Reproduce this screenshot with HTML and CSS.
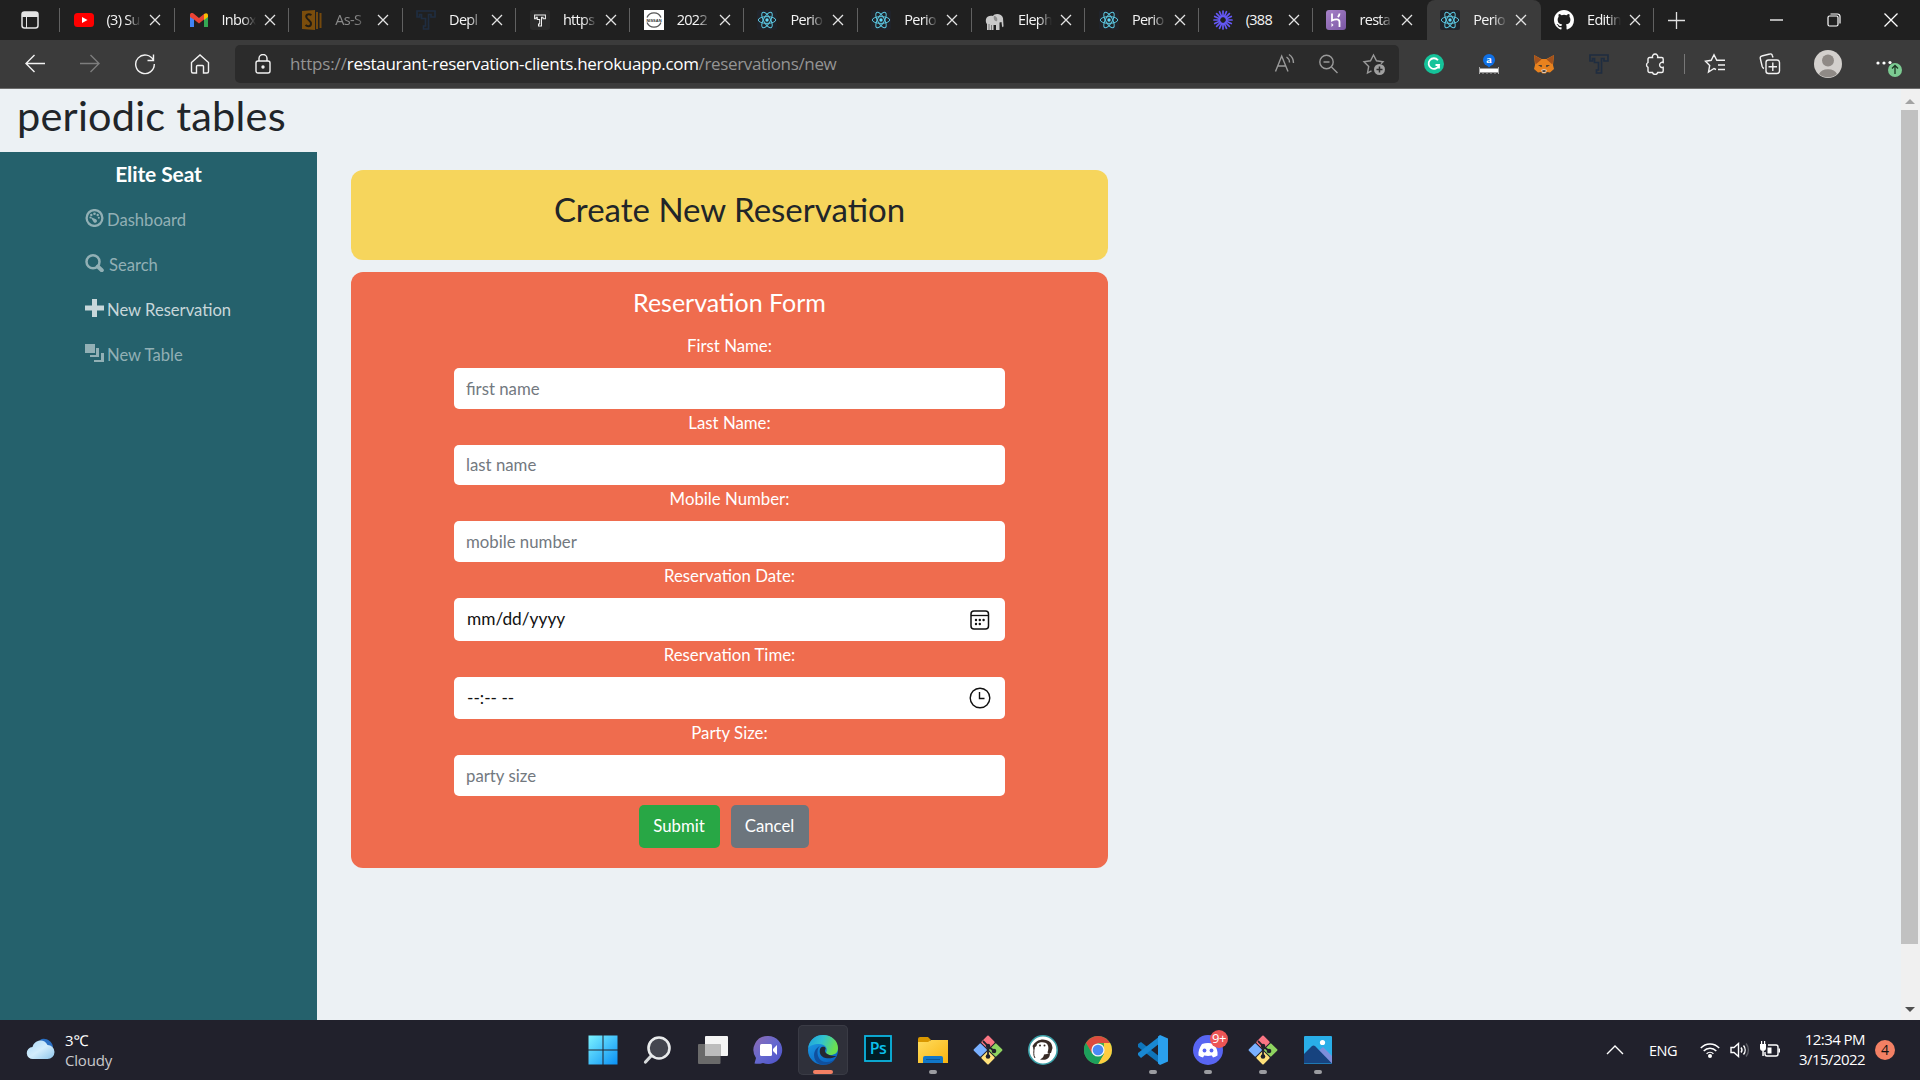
FILE: index.html
```html
<!DOCTYPE html>
<html lang="en">
<head>
<meta charset="utf-8">
<title>Periodic Tables</title>
<link rel="stylesheet" href="styles.css">
</head>
<body>
<svg class="defs" width="0" height="0">
  <defs>
    <linearGradient id="g-win" x1="0" y1="0" x2="1" y2="1"><stop offset="0" stop-color="#7cf3ff"/><stop offset="1" stop-color="#0a90f5"/></linearGradient>
    <linearGradient id="g-edge" x1="0" y1="0" x2="1" y2="0.3"><stop offset="0" stop-color="#1d9fdd"/><stop offset="0.5" stop-color="#31c3d0"/><stop offset="1" stop-color="#6be04f"/></linearGradient>
    <linearGradient id="g-edge2" x1="0" y1="0" x2="0.6" y2="1"><stop offset="0" stop-color="#1fa3e8"/><stop offset="1" stop-color="#0a65c4"/></linearGradient>
    <linearGradient id="g-chat" x1="0" y1="0" x2="1" y2="1"><stop offset="0" stop-color="#8f6bb0"/><stop offset="0.5" stop-color="#6568cf"/><stop offset="1" stop-color="#4b50c8"/></linearGradient>
    <linearGradient id="g-folder" x1="0" y1="0" x2="1" y2="1"><stop offset="0" stop-color="#ffdc5e"/><stop offset="1" stop-color="#f9b40f"/></linearGradient>
    <linearGradient id="g-cloud" x1="0" y1="0" x2="1" y2="1"><stop offset="0" stop-color="#a9d8f8"/><stop offset="0.5" stop-color="#d3edfc"/><stop offset="1" stop-color="#8cc4ea"/></linearGradient>
    <linearGradient id="g-heroku" x1="0" y1="0" x2="1" y2="1"><stop offset="0" stop-color="#a883c9"/><stop offset="1" stop-color="#7a56a3"/></linearGradient>
  </defs>
  <symbol id="i-x" viewBox="0 0 12 12"><path d="M1 1l10 10M11 1L1 11" fill="none" stroke="currentColor" stroke-width="1.3"/></symbol>
  <symbol id="i-react" viewBox="0 0 20 20"><rect width="20" height="20" rx="2" fill="#20232a"/><g fill="none" stroke="#5bc5e0" stroke-width="1"><ellipse cx="10" cy="10" rx="8.7" ry="3.4"/><ellipse cx="10" cy="10" rx="8.7" ry="3.4" transform="rotate(60 10 10)"/><ellipse cx="10" cy="10" rx="8.7" ry="3.4" transform="rotate(120 10 10)"/></g><circle cx="10" cy="10" r="1.7" fill="#61dafb"/></symbol>
  <symbol id="i-tee" viewBox="0 0 20 20"><path d="M1 1h18v6h-4v-2.5h-2.5v14.500h-5v-3h2V8.500h-4V4.500H3.500V7H1z" fill="none" stroke="currentColor" stroke-width="1.700"/></symbol>
  <symbol id="i-git" viewBox="0 0 30 30"><g transform="rotate(45 15 15)"><rect x="4.500" y="4.500" width="10" height="10" rx="1" fill="#f97583"/><rect x="15.500" y="4.500" width="10" height="10" rx="1" fill="#8fd460"/><rect x="4.500" y="15.500" width="10" height="10" rx="1" fill="#79b0ff"/><rect x="15.500" y="15.500" width="10" height="10" rx="1" fill="#ffe17a"/></g><path d="M10 6l5 5v11M15 11l6 5" stroke="#20212b" stroke-width="1.800" fill="none"/><g fill="#20212b"><circle cx="15" cy="11" r="2.300"/><circle cx="15" cy="21.500" r="2.300"/><circle cx="21" cy="16" r="2.300"/></g></symbol>
</svg>

<header class="tabs">
  <div class="tab-actions"><svg width="18" height="18" viewBox="0 0 18 18"><rect x="1" y="1" width="16" height="16" rx="2.500" fill="none" stroke="#e4e4e4" stroke-width="1.500"/><path d="M1 3a2 2 0 0 1 2-2h12a2 2 0 0 1 2 2v3H1z" fill="#e4e4e4"/><path d="M5.500 6v11" stroke="#e4e4e4"/></svg></div>
  <div class="tab first"><svg class="fav" viewBox="0 0 20 20"><rect y="3" width="20" height="14" rx="3.500" fill="#f00"/><path d="M8 7l5.500 3L8 13z" fill="#fff"/></svg><span>(3) Su</span><svg class="x"><use href="#i-x"/></svg></div>
  <div class="tab"><svg class="fav" viewBox="0 0 20 20"><path d="M1 5v12h4V9z" fill="#4285f4"/><path d="M19 5v12h-4V9z" fill="#34a853"/><path d="M1 5c0-2 2-2.500 3.500-1.500L10 8l5-4v5.500l-5 4-5-4L1 7z" fill="#ea4335"/><path d="M15 4c2-1.500 4-.8 4 1.200V7l-4 3z" fill="#fbbc04"/></svg><span>Inbox</span><svg class="x"><use href="#i-x"/></svg></div>
  <div class="tab dim"><svg class="fav" viewBox="0 0 20 20"><path d="M0 1l13-1v20l-13-1z" fill="#7b4d0c"/><path d="M9.500 5C6 3 3.500 5 4.500 7.500S9.500 11 9 14s-4 2.500-5.500 1" fill="none" stroke="#211c14" stroke-width="2"/><path d="M15 2v17M18.500 3v15" stroke="#74490d" stroke-width="2"/></svg><span>As-S</span><svg class="x"><use href="#i-x"/></svg></div>
  <div class="tab"><svg class="fav navy"><use href="#i-tee"/></svg><span>Depl</span><svg class="x"><use href="#i-x"/></svg></div>
  <div class="tab"><svg class="fav" viewBox="0 0 20 20"><rect width="20" height="20" rx="3" fill="#2b2b2b"/><svg x="4" y="4" width="12" height="13" color="#f2f2f2"><use href="#i-tee"/></svg></svg><span>https</span><svg class="x"><use href="#i-x"/></svg></div>
  <div class="tab"><svg class="fav" viewBox="0 0 20 20"><rect width="20" height="20" fill="#fff"/><path d="M3 7.500a7.600 7.600 0 0 1 14 0M3 12.500a7.600 7.600 0 0 0 14 0" fill="none" stroke="#555" stroke-width="1.200"/><text x="10" y="11.700" class="nissan">NISSAN</text></svg><span>2022</span><svg class="x"><use href="#i-x"/></svg></div>
  <div class="tab"><svg class="fav"><use href="#i-react"/></svg><span>Perio</span><svg class="x"><use href="#i-x"/></svg></div>
  <div class="tab"><svg class="fav"><use href="#i-react"/></svg><span>Perio</span><svg class="x"><use href="#i-x"/></svg></div>
  <div class="tab"><svg class="fav" viewBox="0 0 20 20"><path d="M1 9c1-3 4-3.500 7-3 1-3 9-3 10 2l.5 8c0 1.500-1.500 1.500-1.500 0l-.5-4-2 .5V20h-3.500v-5H8.500v5H2v-6c-1-.5-1.500-3-1-5z" fill="#c9c9c9"/><path d="M9 6c2 0 4 2 3 5-2 1-4-2-3-5z" fill="#8d8d8d"/><path d="M4 14v6M6.500 15v5" stroke="#777"/></svg><span>Eleph</span><svg class="x"><use href="#i-x"/></svg></div>
  <div class="tab"><svg class="fav"><use href="#i-react"/></svg><span>Perio</span><svg class="x"><use href="#i-x"/></svg></div>
  <div class="tab"><svg class="fav" viewBox="0 0 20 20"><g stroke="#6458f5" stroke-width="1.700" stroke-linecap="round"><path d="M10 1v5.500M10 13.500V19M1 10h5.500M13.500 10H19M3.600 3.600l4 4M12.400 12.400l4 4M3.600 16.400l4-4M12.400 7.600l4-4M6.500 1.700l2.200 5M11.300 13.300l2.200 5M1.700 6.500l5 2.200M13.300 11.300l5 2.200M1.700 13.500l5-2.200M13.300 8.700l5-2.200M6.500 18.300l2.200-5M11.300 6.700l2.200-5"/></g></svg><span class="full">(388</span><svg class="x"><use href="#i-x"/></svg></div>
  <div class="tab"><svg class="fav" viewBox="0 0 20 20"><rect width="20" height="20" rx="3" fill="url(#g-heroku)"/><path d="M6 3.500v7c3-1.500 7.500-1.800 7.500 1.500v5M13.500 3.500c0 1.500-.7 2.500-1.700 3.500" fill="none" stroke="#fff" stroke-width="1.800"/><path d="M5.500 13v4l2-2z" fill="#fff"/></svg><span>resta</span><svg class="x"><use href="#i-x"/></svg></div>
  <div class="tab active"><svg class="fav"><use href="#i-react"/></svg><span>Perio</span><svg class="x"><use href="#i-x"/></svg></div>
  <div class="tab"><svg class="fav" viewBox="0 0 16 16"><path fill="#fff" d="M8 0C3.580 0 0 3.580 0 8c0 3.540 2.290 6.530 5.470 7.590.4.070.55-.17.55-.38v-1.490c-2.010.37-2.530-.49-2.690-.94-.09-.23-.48-.94-.82-1.130-.28-.15-.68-.52-.01-.53.63-.01 1.080.58 1.230.82.720 1.210 1.870.87 2.330.66.070-.52.280-.87.510-1.070-1.780-.2-3.640-.89-3.640-3.950 0-.87.310-1.590.82-2.150-.08-.2-.36-1.020.08-2.120 0 0 .67-.21 2.200.82a7.600 7.600 0 0 1 4 0c1.530-1.040 2.200-.82 2.200-.82.440 1.100.16 1.920.08 2.120.51.560.82 1.270.82 2.150 0 3.070-1.870 3.750-3.650 3.950.29.250.54.730.54 1.480v2.200c0 .21.150.46.55.38A8 8 0 0 0 16 8c0-4.420-3.580-8-8-8z"/></svg><span>Editin</span><svg class="x"><use href="#i-x"/></svg></div>
  <svg class="plus" width="17" height="17" viewBox="0 0 17 17"><path d="M8.500 0v17M0 8.500h17" stroke="#e0e0e0" stroke-width="1.300"/></svg>
  <div class="window-buttons">
    <svg width="14" height="14"><path d="M0 7h13" stroke="#fff" stroke-width="1.300"/></svg>
    <svg width="14" height="14" fill="none" stroke="#fff" stroke-width="1.200"><rect x="1" y="3" width="10" height="10" rx="1.500"/><path d="M3.500 1h7a2.500 2.500 0 0 1 2.500 2.500v7"/></svg>
    <svg width="14" height="14"><path d="M.5.5l13 13M13.500.5l-13 13" stroke="#fff" stroke-width="1.300"/></svg>
  </div>
</header>

<nav class="toolbar">
  <div class="nav-buttons">
    <svg width="22" height="22" viewBox="0 0 22 22"><path d="M21 10.500H2M10.500 2L2 10.500l8.500 8.500"/></svg>
    <svg class="off" width="22" height="22" viewBox="0 0 22 22"><path d="M1 10.500h19M11.500 2l8.500 8.500-8.500 8.500"/></svg>
    <svg width="22" height="22" viewBox="0 0 22 22"><path d="M19.500 7.500A9.300 9.300 0 1 0 20.300 11M19.500 1.500v6h-6"/></svg>
    <svg width="22" height="22" viewBox="0 0 22 22"><path d="M2.500 9.500L11 2l8.500 7.500v9a1.500 1.500 0 0 1-1.500 1.500h-3.500v-6.500a1 1 0 0 0-1-1h-5a1 1 0 0 0-1 1V20H4a1.500 1.500 0 0 1-1.500-1.500z"/></svg>
  </div>
  <div class="address">
    <svg width="16" height="20" viewBox="0 0 16 20"><rect x="1" y="7" width="14" height="12" rx="2"/><path d="M4 7V4.500a4 4 0 0 1 8 0V7"/><circle cx="8" cy="13" r="1" fill="#fff"/></svg>
    <div class="url"><span class="scheme">https://</span><span class="host">restaurant-reservation-clients.herokuapp.com</span><span class="path">/reservations/new</span></div>
    <div class="address-actions">
      <svg class="read" width="22" height="22" viewBox="0 0 22 22"><path d="M1.500 18.500L7.700 3 14 18.500M3.700 13h8M12.500 4a6.500 6.500 0 0 1 3 5.500M15 1.500a10 10 0 0 1 4.500 8.500"/></svg>
      <svg width="22" height="22" viewBox="0 0 22 22"><circle cx="9.500" cy="9" r="6.700"/><path d="M14.500 14l6 6M6.500 9h6"/></svg>
      <svg width="24" height="24" viewBox="0 0 24 24"><path d="M9.500 18.800L5.500 21l1.200-6.500L2 9.800l6.500-1L11.500 3l3 5.800 6.500 1-2 2"/><circle cx="17.500" cy="17.500" r="5.500" fill="#a0a0a0" stroke="none"/><path d="M17.500 14.500v6M14.500 17.500h6" stroke="#2b2b2b" stroke-width="1.500"/></svg>
    </div>
  </div>
  <div class="extensions">
    <svg class="solid" width="20" height="20" viewBox="0 0 20 20"><circle cx="10" cy="10" r="10" fill="#15c39a"/><path d="M14 6.200A5.300 5.300 0 1 0 15 11h-3.500M15 11v3.500" stroke="#fff" stroke-width="1.800"/></svg>
    <svg class="solid" width="20" height="20" viewBox="0 0 20 20"><circle cx="10" cy="6" r="6" fill="#0f70e6"/><text x="10" y="9" class="glyph-a">a</text><path d="M7 10.500l3 3 3-3z" fill="#0f70e6"/><path d="M1 14.500h18v4H1z" fill="#fff"/><path d="M.5 13v7M19.500 13v7M4 19v1.500M8 19v1.500M12 19v1.500M16 19v1.500" stroke="#aaa" stroke-width="1"/></svg>
    <svg class="solid" width="20" height="20" viewBox="0 0 20 20"><path d="M0 1l7.500 4h5L20 1l-1 10 1 4-4 3.500-3-.5-1.500 1.500h-3L7 18l-3 .5L0 15l1-4z" fill="#e8821e"/><path d="M0 1l7.500 4.500-6 5zM20 1l-7.500 4.500 6 5z" fill="#a2511c"/><path d="M4 11l4 .3-.5 2zM16 11l-4 .3.500 2z" fill="#333"/><path d="M7 16l3-1 3 1-1.500 3h-3z" fill="#d9c9bb"/><path d="M8.500 16.300h3v1.500h-3z" fill="#222"/></svg>
    <svg class="navy solid" width="20" height="20"><use href="#i-tee"/></svg>
    <svg width="22" height="22" viewBox="0 0 22 22"><path d="M5.500 4.500h3a2.700 2.700 0 1 1 5.200 0h4a1.500 1.500 0 0 1 1.500 1.500v3.500a2.600 2.600 0 1 0 0 4.800V18a1.500 1.500 0 0 1-1.500 1.500h-4a2.700 2.700 0 0 1-5.200 0h-3A1.500 1.500 0 0 1 4 18v-3.700a2.700 2.700 0 0 1 0-4.800V6a1.500 1.500 0 0 1 1.500-1.500z"/></svg>
  </div>
  <div class="profile">
    <svg width="22" height="22" viewBox="0 0 22 22"><path d="M12 16.500L10 15.500l-5.500 3.500 1.200-6.500L1.500 8.300l5.700-1L10 1.800l2.800 5.500H21M14 12h7M14 16.500h7"/></svg>
    <svg width="22" height="22" viewBox="0 0 22 22"><path d="M5 15.500c-1-.3-1.500-1-1.800-2L1.300 5.500a2 2 0 0 1 1.500-2.500l8-2a2 2 0 0 1 2.500 1.500l.7 2"/><rect x="7" y="7" width="13.500" height="13.500" rx="2.500"/><path d="M13.800 9.500v8.500M9.500 13.800h8.500"/></svg>
    <svg class="solid" width="28" height="28" viewBox="0 0 28 28"><circle cx="14" cy="14" r="14" fill="#d3d0cd"/><circle cx="14" cy="10.500" r="6" fill="#8f8a86"/><path d="M5 24a9.500 7 0 0 1 18 0 14 14 0 0 1-18 0z" fill="#8f8a86"/></svg>
    <svg class="solid" width="28" height="28" viewBox="0 0 28 28"><g fill="#fff"><circle cx="3" cy="13" r="1.600"/><circle cx="9" cy="13" r="1.600"/><circle cx="15" cy="12.500" r="1.600"/></g><circle cx="20" cy="20" r="7" fill="#7ccb92"/><path d="M20 24v-8M17 18.500l3-3 3 3" fill="none" stroke="#1d3524" stroke-width="1.300"/></svg>
  </div>
</nav>

<div class="viewport">
  <div class="page">
    <h1 class="site-title">periodic tables</h1>
    <div class="columns">
      <aside class="sidebar">
        <div class="brand">Elite Seat</div>
        <a class="link"><svg width="19" height="18" viewBox="0 0 19 18"><circle cx="9.500" cy="9" r="7.900" fill="none" stroke="currentColor" stroke-width="2.300"/><g fill="currentColor"><circle cx="9.500" cy="4.800" r="1.300"/><circle cx="6.300" cy="6" r="1.200"/><circle cx="12.700" cy="6" r="1.200"/><circle cx="5.400" cy="8.500" r="1"/><circle cx="13.800" cy="8.800" r="1"/><path d="M5.500 8l5.500 2.300a1.900 1.900 0 1 1-2.800 2z"/></g></svg><span>Dashboard</span></a>
        <a class="link"><svg width="19" height="18" viewBox="0 0 19 18"><circle cx="8" cy="7.800" r="6.500" fill="none" stroke="currentColor" stroke-width="2.500"/><path d="M12.800 12.500l4 3.700" stroke="currentColor" stroke-width="4" stroke-linecap="round"/></svg><span class="search">Search</span></a>
        <a class="link current"><svg width="19" height="18" viewBox="0 0 19 18"><path d="M7 0h5v6.500h7v5h-7V18H7v-6.500H0v-5h7z" fill="currentColor"/></svg><span>New Reservation</span></a>
        <a class="link"><svg width="19" height="18" viewBox="0 0 19 18"><path d="M0 0h10v9H0zM11 4h3v9H5v-2h6zM16 9h3v9H9v-2h7z" fill="currentColor"/></svg><span>New Table</span></a>
      </aside>
      <main class="main">
        <h2 class="banner">Create New Reservation</h2>
        <form class="form">
          <h3>Reservation Form</h3>
          <label>First Name:</label>
          <input class="field" type="text" placeholder="first name">
          <label>Last Name:</label>
          <input class="field h40" type="text" placeholder="last name">
          <label>Mobile Number:</label>
          <input class="field" type="text" placeholder="mobile number">
          <label>Reservation Date:</label>
          <div class="field picker h43"><span>mm/dd/yyyy</span><svg width="20" height="20" viewBox="0 0 20 20"><rect x="1" y="1" width="17.500" height="18" rx="3" fill="none" stroke="#111" stroke-width="1.500"/><path d="M1 5.500h17.500" stroke="#111" stroke-width="1.300"/><g fill="#111"><circle cx="6" cy="10" r="1.200"/><circle cx="9.800" cy="10" r="1.200"/><circle cx="13.600" cy="10" r="1.200"/><circle cx="6" cy="14" r="1.200"/><circle cx="9.800" cy="14" r="1.200"/></g></svg></div>
          <label>Reservation Time:</label>
          <div class="field picker time h42"><span>--:-- --</span><svg width="22" height="22" viewBox="0 0 22 22" fill="none" stroke="#111" stroke-width="1.400"><circle cx="11" cy="11" r="9.800"/><path d="M10.500 5v6.500h5"/></svg></div>
          <label>Party Size:</label>
          <input class="field" type="text" placeholder="party size">
          <div class="buttons"><button type="button" class="submit">Submit</button><button type="button" class="cancel">Cancel</button></div>
        </form>
      </main>
    </div>
  </div>
  <div class="scrollbar"><i class="up"></i><b></b><i class="down"></i></div>
</div>

<footer class="taskbar">
  <div class="weather">
    <svg width="30" height="24" viewBox="0 0 30 24"><path d="M14 3c4-3 12 0 13 7l-6 4z" fill="#2a70c4"/><path d="M7 22a6 6 0 0 1-.5-12C8 3 18 .5 21.500 8a7 7 0 0 1 0 14z" fill="url(#g-cloud)"/></svg>
    <div><p>3℃</p><p class="sub">Cloudy</p></div>
  </div>
  <div class="apps">
    <div class="app"><svg viewBox="0 0 30 30"><path d="M0 0h14v14H0zM15 0h14v14H15zM0 15h14v14H0zM15 15h14v14H15z" fill="url(#g-win)" transform="translate(.5 .5)"/></svg></div>
    <div class="app"><svg viewBox="0 0 30 30"><path d="M9 20l-6.500 7" stroke="#d6d9db" stroke-width="3.200" stroke-linecap="round"/><circle cx="16" cy="13" r="10.500" fill="#44464f" stroke="#e9ebec" stroke-width="2.600"/></svg></div>
    <div class="app"><svg viewBox="0 0 30 30"><rect x="7" y="1" width="23" height="20" rx="1" fill="#f4f4f4"/><rect x="0" y="9" width="22.500" height="20" rx="1" fill="#6a6a6a"/><path d="M7 9h15.500v12H7z" fill="#bcbcbc"/></svg></div>
    <div class="app"><svg viewBox="0 0 30 30"><path d="M15 1a14 14 0 1 1-5 27c-3 1-6 1-8.500.5L3 23A14 14 0 0 1 15 1z" fill="url(#g-chat)"/><rect x="7" y="9" width="12" height="12" rx="1.500" fill="#fff"/><path d="M20 14l4-4v10l-4-4z" fill="#fff"/></svg></div>
    <div class="app selected"><svg viewBox="0 0 30 30"><circle cx="15" cy="15" r="15" fill="url(#g-edge2)"/><path d="M.2 13C1.500 4 8 0 15 0c9 0 15 6 15 13 0 5-3.500 7-7.500 7-3 0-5-1.500-4.200-3C20 13 17 9 11 9 5.500 9 1.500 11 .2 13z" fill="url(#g-edge)"/><path d="M12 11c-4 3-4 15 6 16 4 .5 7-1 9.500-3.500C24 30 15 31.500 10 28 4 24 5 14 12 11z" fill="#10509e"/><path d="M12.500 13c-2 4 0 9 5 10 4 .8 8 0 11-2-2 0-9-.5-11-3.500-1.500-2 .5-3 0-4.500s-3.500-2-5 0z" fill="#252733"/></svg><em></em></div>
    <div class="app"><svg viewBox="0 0 30 30"><rect x="2" y="1" width="26" height="25" fill="#001d26" stroke="#0cb6e2" stroke-width="1.800"/><text x="15" y="19" class="ps">Ps</text></svg></div>
    <div class="app open"><svg viewBox="0 0 30 30"><path d="M0 4a2 2 0 0 1 2-2h8l3 3h-1v5H0z" fill="#d99700"/><path d="M0 7h10l3-2h17v23H0z" fill="url(#g-folder)"/><path d="M5 28v-5a2 2 0 0 1 2-2h16a2 2 0 0 1 2 2v5z" fill="#1177c8"/><path d="M8 24.500h14" stroke="#0a5799"/></svg><em></em></div>
    <div class="app"><svg><use href="#i-git"/></svg></div>
    <div class="app"><svg viewBox="0 0 30 30"><circle cx="15" cy="15" r="14.200" fill="#fff" stroke="#3aa0a8" stroke-width="1.600"/><path d="M4.500 11C8 5 14 3.500 18 5c4 1 6 3 6.500 8l-1.500 5-3 .5c-1-3 0-6-2-8-2-1.500-5-1.500-7-.5l-4 2-1 3z" fill="#382b26"/><path d="M9 9c2-2 6-2.500 9-1 2 1.500 3 4 2 8l-2 2-6-1-4-4z" fill="#fff"/><path d="M19 19l3-1c0 3-1 5-3 6-2 1-5 1-7 .5 2-1 4-3 4-5z" fill="#382b26"/><path d="M6 13c0 4-1 7 1 10" fill="none" stroke="#382b26" stroke-width="1"/><circle cx="12" cy="10.500" r="1" fill="#382b26"/><circle cx="16.500" cy="10.500" r="1" fill="#382b26"/></svg></div>
    <div class="app"><svg viewBox="0 0 30 30"><circle cx="15" cy="15" r="14" fill="#4caf50"/><path d="M2.900 8A14 14 0 0 1 27.100 8H15z" fill="#dd4b3e"/><path d="M2.900 8L9 18.500 15 8z" fill="#dd4b3e"/><path d="M27.100 8A14 14 0 0 1 15 29l6-10.500V8z" fill="#ffcd40"/><path d="M2.900 8A14 14 0 0 0 15 29l6-10.500-12 0z" fill="#1da05c"/><circle cx="15" cy="15" r="6.600" fill="#f3f3f3"/><circle cx="15" cy="15" r="5.300" fill="#4a8af4"/></svg></div>
    <div class="app open"><svg viewBox="0 0 30 30"><path d="M0 9l3-2 19 15v7L0 12z" fill="#0f75ba"/><path d="M0 20l3 3L22 8V1L0 18z" fill="#1988d2"/><path d="M22 0l8 3.500v23L22 30l-2-1.500V1.500z" fill="#2aa0ee"/></svg><em></em></div>
    <div class="app open"><svg viewBox="0 0 30 30"><circle cx="15" cy="15" r="15" fill="#5865f2"/><path d="M9 9c4-1.500 8-1.500 12 0 2.500 3.500 4 7.500 3.500 11.500-1.500 1-3 1.500-4.500 2l-1.200-2c-2.500.6-5 .6-7.600 0L10 22.500c-1.500-.5-3-1-4.500-2C5 16.500 6.500 12.500 9 9z" fill="#fff"/><circle cx="11.500" cy="15.500" r="1.900" fill="#5865f2"/><circle cx="18.500" cy="15.500" r="1.900" fill="#5865f2"/></svg><em></em><span class="badge">9+</span></div>
    <div class="app open"><svg><use href="#i-git"/></svg><em></em></div>
    <div class="app open"><svg viewBox="0 0 30 30"><rect x="1" y="1" width="28" height="28" rx="1" fill="#29aee8"/><path d="M14 17l6-5 9 9v7H14z" fill="#7d8fdb"/><path d="M1 19l8-8c1-.8 2-.8 3 0l17 17.500H2a1 1 0 0 1-1-1z" fill="#17437f"/><circle cx="19.500" cy="7.500" r="2.600" fill="#fff"/></svg><em></em></div>
  </div>
  <div class="tray">
    <svg width="18" height="10" viewBox="0 0 18 10"><path d="M1 9l8-8 8 8"/></svg>
    <span class="lang">ENG</span>
    <svg width="20" height="16" viewBox="0 0 20 16"><path d="M.8 6a12.500 12.500 0 0 1 18.400 0M3.700 9a8.600 8.600 0 0 1 12.600 0M6.600 11.700a5 5 0 0 1 6.800 0"/><circle cx="10" cy="14" r="2" fill="#fff" stroke="none"/></svg>
    <svg class="vol" width="20" height="16" viewBox="0 0 20 16"><path d="M1 5.500h3L8.500 1.500v13L4 10.500H1z"/><path d="M11 5.500a4 4 0 0 1 0 5M13.500 3.500a7 7 0 0 1 0 9"/><path d="M16 1.500a10 10 0 0 1 0 13" stroke="#5d5e66"/></svg>
    <svg width="20" height="18" viewBox="0 0 20 18"><path d="M8 4h8a2 2 0 0 1 2 2v7a2 2 0 0 1-2 2H7a2 2 0 0 1-2-2v-2"/><path d="M18.500 7.500h1.500v4h-1.500zM7.500 6.500h4v6h-4zM0 3h6v4a3 3 0 0 1-6 0zM1 0h1.200v3H1zM4 0h1.200v3H4zM2.300 9h1.500v6H2.300z" fill="#fff" stroke="none"/></svg>
    <div class="clock"><p>12:34 PM</p><p>3/15/2022</p></div>
    <span class="count">4</span>
  </div>
</footer>
</body>
</html>
```
FILE: styles.css
```css
* { box-sizing: border-box; }
html, body { margin: 0; height: 1080px; overflow: hidden; }
body {
  display: flex;
  flex-direction: column;
  width: 1920px;
  font-family: Lato, "Liberation Sans", sans-serif;
  font-size: 16.8px;
  background: #ecf1f4;
}
p, h1, h2, h3 { margin: 0; font-weight: 400; }
svg { display: block; flex: none; }
.defs { position: absolute; }

.tabs, .toolbar, .taskbar { font-family: "Open Sans", "Noto Sans", sans-serif; color: #fff; flex: none; }

/* tab strip */
.tabs { display: flex; align-items: center; height: 40px; background: #202020; }
.tab-actions { display: flex; align-items: center; width: 60px; height: 24px; padding-left: 21px; border-right: 1px solid #616161; }
.tab { width: 113.8px; height: 40px; display: flex; align-items: center; flex: none; padding-left: 13.5px; background: linear-gradient(#616161, #616161) right 8px / 1px 24px no-repeat; }
.tab.first { width: 115px; }
.tab:has(+ .active), .tab.active { background-image: none; }
.tab.active { background-color: #3b3b3b; border-radius: 8px 8px 0 0; }
.fav { width: 20px; height: 20px; }
.tab span {
  width: 34px; margin: -1px 8px 0 13px; overflow: hidden; white-space: nowrap;
  font-size: 14.5px; line-height: 24px; letter-spacing: -0.7px; color: #f4f4f4;
  -webkit-mask-image: linear-gradient(90deg, #000 60%, transparent);
  mask-image: linear-gradient(90deg, #000 60%, transparent);
}
.tab .full { -webkit-mask-image: none; mask-image: none; }
.tab.dim span { color: #8a8a8a; }
.x { width: 12px; height: 12px; color: #e4e4e4; }
.navy { color: #1f2d40; }
.nissan { font: 700 4px "Liberation Sans", sans-serif; text-anchor: middle; fill: #333; }
.plus { margin-left: 14px; }
.window-buttons { display: flex; gap: 43px; margin-left: auto; padding-right: 22px; }

/* toolbar */
.toolbar { display: flex; align-items: center; height: 49px; background: #3b3b3b; border-bottom: 1px solid #6c6c6c; }
.toolbar svg { fill: none; stroke: #f2f2f2; stroke-width: 1.4; }
.toolbar svg.solid { stroke: none; }
.nav-buttons { display: flex; gap: 33px; width: 235px; padding-left: 24px; }
.toolbar .off { stroke: #7d7d7d; }
.address { display: flex; align-items: center; width: 1164px; height: 38px; padding: 0 13px 0 20px; background: #2b2b2b; border-radius: 5px; }
.url { margin-left: 19px; font-size: 17px; line-height: 24px; white-space: nowrap; }
.scheme, .path { color: #949494; }
.scheme { letter-spacing: -0.15px; }
.host { letter-spacing: -0.3px; }
.path { letter-spacing: -0.35px; }
.address-actions { display: flex; align-items: center; gap: 23px; margin-left: auto; }
.address-actions .read { margin-right: -2px; }
.toolbar .address-actions svg { stroke: #9a9a9a; }
.extensions { display: flex; align-items: center; gap: 35px; padding: 0 18px 0 25px; }
.glyph-a { font: 700 11px "Liberation Serif", serif; text-anchor: middle; fill: #fff; stroke: none; }
.profile { display: flex; align-items: center; gap: 33px; padding-left: 20px; background: linear-gradient(#777, #777) left center / 1px 20px no-repeat; }

/* page */
.viewport { display: flex; height: 931px; flex: none; }
.page { width: 1901px; display: flex; flex-direction: column; color: #212529; }
.site-title { height: 63px; padding-left: 17px; font-size: 41.5px; line-height: 52px; letter-spacing: 0.2px; }
.columns { display: flex; flex: 1; }
.sidebar { width: 317px; background: #25616c; }
.brand { height: 45px; text-align: center; color: #fff; font-weight: 700; font-size: 21px; line-height: 43px; letter-spacing: -0.1px; }
.link { display: flex; height: 45px; padding: 12px 0 0 85px; gap: 3px; color: #92b0b5; font-size: 16.6px; }
.link span { line-height: 23px; }
.link .search { padding-left: 2px; }
.link.current { color: #c8d7da; }
.main { padding: 18px 0 0 34px; width: 791px; }
.banner { height: 90px; border-radius: 12px; background: #f6d55c; text-align: center; font-size: 33px; line-height: 79px; }
.form { display: flex; flex-direction: column; align-items: center; height: 596px; margin-top: 12px; border-radius: 12px; background: #ef6c4e; color: #fff; }
.form h3 { height: 60px; padding-top: 1px; font-size: 25px; line-height: 59px; }
.form label { height: 36px; padding-top: 2px; line-height: 23px; }
.field { width: 551px; height: 41px; flex: none; border: 0; border-radius: 5px; padding: 0 12px 1px; background: #fff; font: 16.8px/24px Lato, sans-serif; }
.field::placeholder { color: #73797f; opacity: 1; }
.picker { display: flex; align-items: center; justify-content: space-between; padding: 0 15px 0 13px; color: #111; font-size: 17.3px; }
.picker span { padding-bottom: 1px; }
.time { padding-right: 14px; }
.h40 { height: 40px; }
.h42 { height: 42px; }
.h43 { height: 43px; }
.buttons { display: flex; gap: 11px; margin: 9px 12px 0 0; }
.buttons button { height: 43px; border: 0; border-radius: 5px; padding: 0 0 1px; color: #fff; font: 16.8px/24px Lato, sans-serif; }
.buttons .submit { width: 81px; background: #28a745; }
.buttons .cancel { width: 78px; background: #6c757d; }

.scrollbar { width: 19px; background: #f0f0f0; display: flex; flex-direction: column; }
.scrollbar b { width: 17px; height: 834px; background: #c1c1c1; }
.scrollbar i { width: 0; height: 0; border: 5px solid transparent; margin-left: 4px; }
.scrollbar .up { margin: 10px 0 6px 4px; border-top-width: 0; border-bottom-color: #a3a3a3; }
.scrollbar .down { border-bottom-width: 0; border-top-color: #505050; margin-top: 63px; }

/* taskbar */
.taskbar { display: flex; height: 60px; background: #21212c; }
.weather { display: flex; width: 575px; padding: 10px 0 0 26px; gap: 9px; }
.weather svg { margin-top: 7px; }
.weather p { font-size: 15px; line-height: 20px; letter-spacing: -0.2px; }
.weather .sub { color: #c9c9cc; }
.apps { display: flex; gap: 5px; margin-left: 3px; }
.app { position: relative; width: 50px; height: 50px; margin-top: 5px; padding: 10px; border-radius: 5px; }
.app svg { width: 30px; height: 30px; }
.app.selected { background: #2f303a; box-shadow: inset 0 0 0 1px #3a3b45; }
.app em { position: absolute; left: 21px; top: 45px; width: 8px; height: 4px; border-radius: 2px; background: #9b9ca1; }
.app.selected em { left: 15px; width: 20px; background: #f38064; }
.badge { position: absolute; left: 27px; top: 5px; width: 18px; height: 18px; border-radius: 9px; background: #ed5555; font-size: 13px; line-height: 17px; letter-spacing: -0.5px; text-align: center; }
.ps { font: 600 16px "Open Sans", sans-serif; letter-spacing: -0.5px; text-anchor: middle; fill: #0cc0ec; }
.tray { display: flex; align-items: center; margin-left: auto; padding-right: 25px; }
.tray svg { fill: none; stroke: #fff; stroke-width: 1.4; }
.lang { width: 29px; margin: 0 22px 0 25px; font-size: 14.5px; letter-spacing: -0.5px; }
.tray .vol { margin: 0 10px; }
.clock { width: 85px; text-align: right; font-size: 15px; line-height: 20px; letter-spacing: -0.55px; padding-bottom: 2px; }
.count { width: 20px; height: 20px; margin-left: 10px; border-radius: 50%; background: #f38064; color: #111; font-size: 14px; line-height: 20px; text-align: center; }
```
